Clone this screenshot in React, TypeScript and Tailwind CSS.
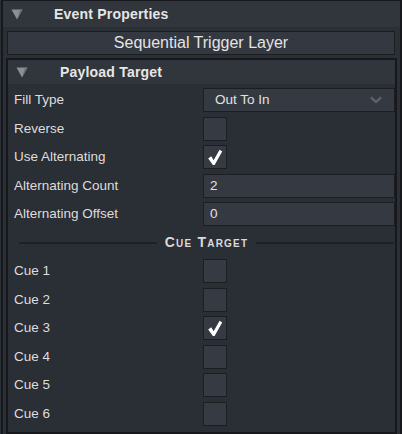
import React from 'react';

const Triangle = () => (
    <svg width="12" height="11" viewBox="0 0 12 11" className="shrink-0">
        <polygon points="0.5,0.5 11.5,0.5 6,10.5" fill="#8c8f94" />
        <polygon points="6,10.5 11.5,0.5 9,0.5" fill="#6e7176" />
    </svg>
);

const Check = () => (
    <svg width="16" height="17" viewBox="0 0 16 17">
        <path d="M1.2 9.4 L4.3 7.3 L6.6 11.2 L12.6 0.8 L15.2 2.4 L7.6 16 L5.9 16 Z" fill="#ffffff" />
    </svg>
);

const Checkbox = ({ checked }: { checked?: boolean }) => (
    <div className="w-6 h-6 border border-[#1b1d21] bg-[#363a43] flex items-center justify-center">
        {checked && <Check />}
    </div>
);

const Label = ({ children }: { children: React.ReactNode }) => (
    <div className="text-[13.5px] text-[#dddddd] leading-6">{children}</div>
);

const TextField = ({ value }: { value: string }) => (
    <div className="h-6 border border-[#1b1d21] bg-[#353942] pl-[6px] text-[13.5px] leading-[22px] text-[#e2e2e2]">
        {value}
    </div>
);

export default function App() {
    const cues = [false, false, true, false, false, false];

    return (
        <div className="w-[402px] h-[434px] overflow-hidden bg-[#2b2f36] pl-px font-['Liberation_Sans',Arial,sans-serif]">
            <div className="h-[434px] border-x-2 border-t border-[#16181b] flex flex-col">
                {/* Event Properties header */}
                <div className="h-[26px] bg-[#31353c] flex items-center pl-2 shrink-0">
                    <Triangle />
                    <span className="ml-[31px] text-[14px] font-bold text-[#e6e6e6] tracking-[0.2px]">Event Properties</span>
                </div>

                <div className="flex-1 px-[3px] pt-1 flex flex-col min-h-0">
                    <div className="ml-px mr-[2px] h-6 shrink-0 border border-[#1b1d21] bg-[#343841] flex items-center justify-center text-[16px] text-[#e4e4e4]">
                        Sequential Trigger Layer
                    </div>

                    {/* Payload Target panel */}
                    <div className="flex-1 mt-[3px] border-2 border-[#16181b] bg-[#2a2e35] flex flex-col">
                        <div className="h-6 bg-[#31353c] flex items-center pl-2 shrink-0">
                            <Triangle />
                            <span className="ml-[32px] text-[14px] font-bold text-[#e6e6e6] tracking-[0.2px]">Payload Target</span>
                        </div>

                        <div className="pl-[6px] pt-1 grid grid-cols-[189px_1fr] gap-y-[4.5px] items-center">
                            <Label>Fill Type</Label>
                            <div className="h-6 border border-[#1b1d21] bg-[#353942] flex items-center justify-between pl-[11px] pr-3 text-[13.5px] text-[#e2e2e2]">
                                <span>Out To In</span>
                                <svg width="12" height="8" viewBox="0 0 12 8">
                                    <polyline points="1,1.5 6,6 11,1.5" fill="none" stroke="#5d6168" strokeWidth="2.4" />
                                </svg>
                            </div>

                            <Label>Reverse</Label>
                            <Checkbox />

                            <Label>Use Alternating</Label>
                            <Checkbox checked />

                            <Label>Alternating Count</Label>
                            <TextField value="2" />

                            <Label>Alternating Offset</Label>
                            <TextField value="0" />

                            <div className="col-span-2 h-6 flex items-center pl-[5px] pr-px">
                                <div className="flex-1 h-[2px] bg-[#1d2024]" />
                                <span className="px-2 text-[14px] font-bold text-[#dadada] [font-variant:small-caps] tracking-[1.2px]">Cue Target</span>
                                <div className="flex-1 h-[2px] bg-[#1d2024]" />
                            </div>

                            {cues.map((c, i) => (
                                <React.Fragment key={i}>
                                    <Label>Cue {i + 1}</Label>
                                    <Checkbox checked={c} />
                                </React.Fragment>
                            ))}
                        </div>
                    </div>
                </div>
            </div>
        </div>
    );
}
